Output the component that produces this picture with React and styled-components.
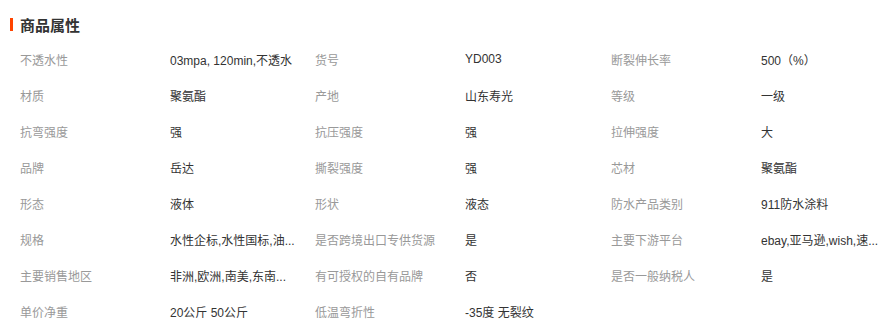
import React from 'react';
import styled, { createGlobalStyle } from 'styled-components';

const GlobalStyle = createGlobalStyle`
    body {
        margin: 0;
        background: #fff;
        font-family: "Liberation Sans", "Noto Sans CJK SC", sans-serif;
    }
`;

const Panel = styled.div`
    width: 887px;
    height: 334px;
    box-sizing: border-box;
    padding-top: 14px;
`;

const Heading = styled.h3`
    display: flex;
    align-items: center;
    gap: 7px;
    height: 20px;
    margin: 0 0 7px 10px;
    font-size: 15px;
    font-weight: bold;
    color: #333;
`;

const Marker = styled.span`
    width: 3px;
    height: 13px;
    background: #ff4400;
`;

const Grid = styled.div`
    display: grid;
    grid-template-columns: 295px 296px 276px;
    padding-left: 20px;
`;

const Item = styled.div`
    display: flex;
    height: 36px;
    align-items: center;
    font-size: 12px;
`;

const Label = styled.span`
    width: 150px;
    flex-shrink: 0;
    color: #999;
`;

const Value = styled.span`
    color: #333;
    white-space: nowrap;
`;

const attrs = [
    ['不透水性', '03mpa, 120min,不透水'],
    ['货号', 'YD003'],
    ['断裂伸长率', '500（%）'],
    ['材质', '聚氨酯'],
    ['产地', '山东寿光'],
    ['等级', '一级'],
    ['抗弯强度', '强'],
    ['抗压强度', '强'],
    ['拉伸强度', '大'],
    ['品牌', '岳达'],
    ['撕裂强度', '强'],
    ['芯材', '聚氨酯'],
    ['形态', '液体'],
    ['形状', '液态'],
    ['防水产品类别', '911防水涂料'],
    ['规格', '水性企标,水性国标,油...'],
    ['是否跨境出口专供货源', '是'],
    ['主要下游平台', 'ebay,亚马逊,wish,速...'],
    ['主要销售地区', '非洲,欧洲,南美,东南...'],
    ['有可授权的自有品牌', '否'],
    ['是否一般纳税人', '是'],
    ['单价净重', '20公斤 50公斤'],
    ['低温弯折性', '-35度 无裂纹'],
];

export default function App() {
    return (
        <Panel>
            <GlobalStyle />
            <Heading>
                <Marker />
                商品属性
            </Heading>
            <Grid>
                {attrs.map(([label, value]) => (
                    <Item key={label}>
                        <Label>{label}</Label>
                        <Value>{value}</Value>
                    </Item>
                ))}
            </Grid>
        </Panel>
    );
}
